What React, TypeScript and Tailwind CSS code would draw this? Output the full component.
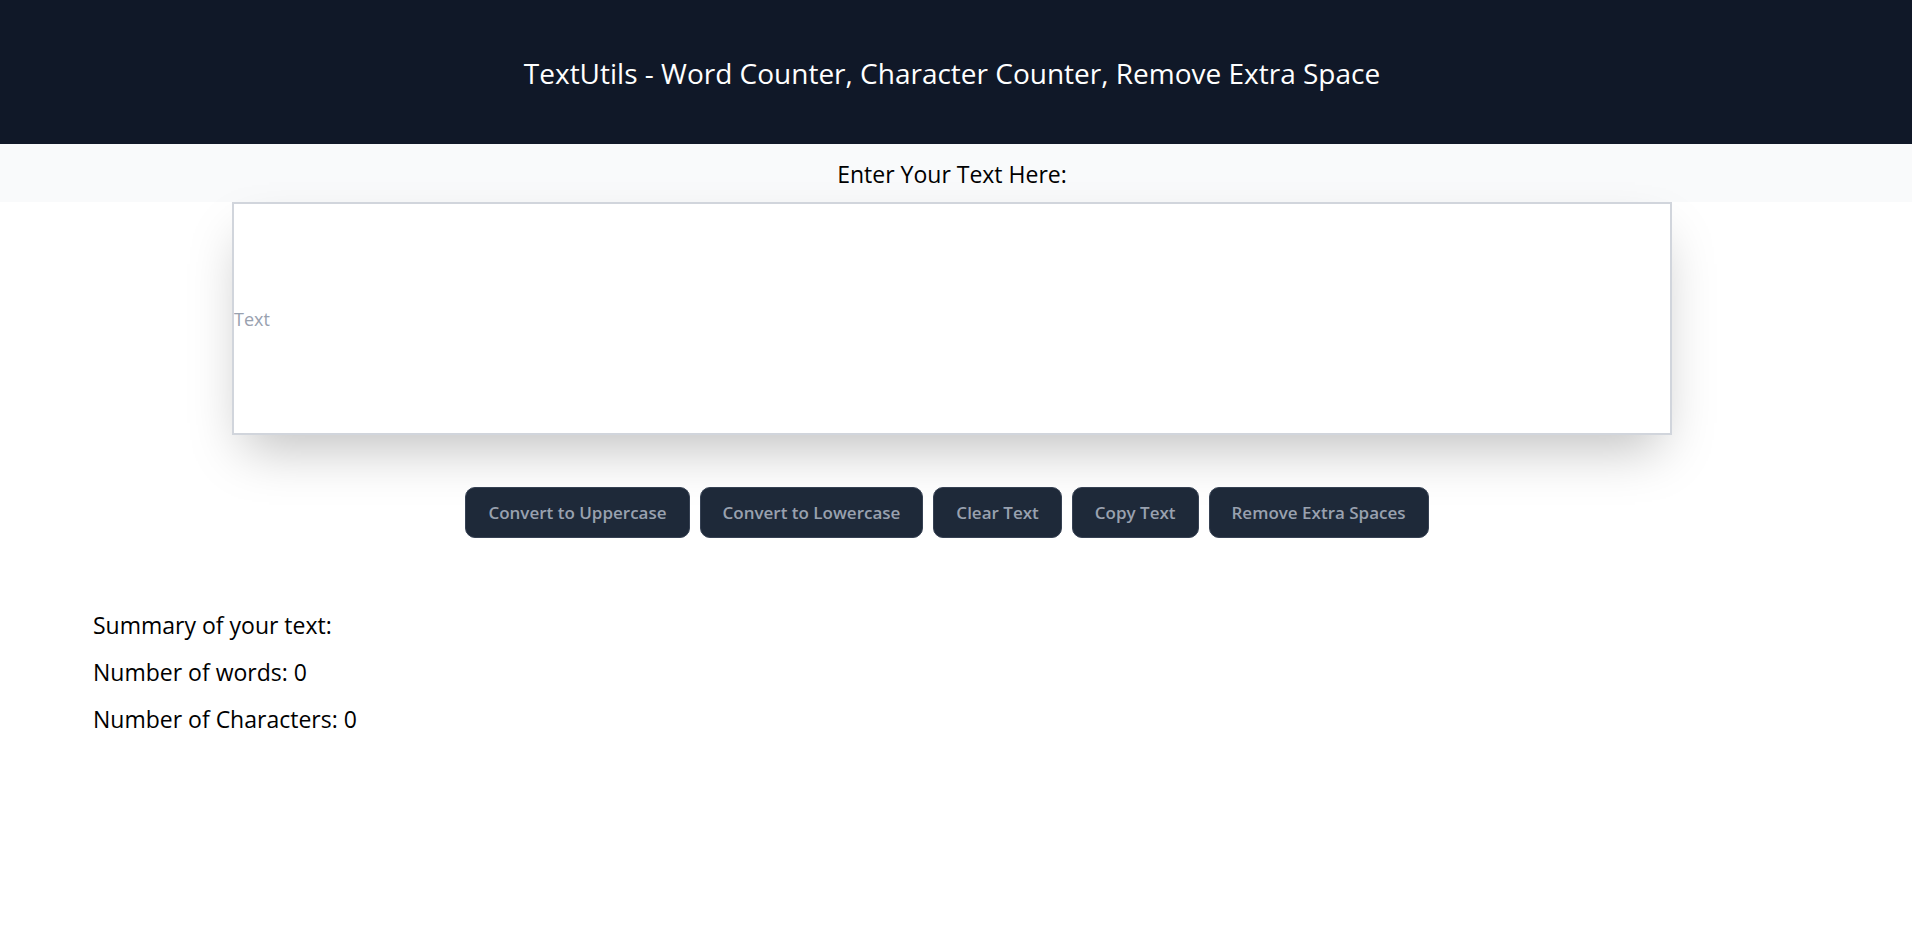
import { useState } from "react";

export default function App() {
  const [text, setText] = useState("");

  const words = text.split(/\s+/).filter((w) => w.length > 0).length;

  return (
    <div className="min-h-screen bg-white font-['Open_Sans',sans-serif]">
      <header className="flex h-[144px] items-center justify-center bg-gray-900 pr-[8px] pt-[2px] text-[28px] text-white">
        TextUtils - Word Counter, Character Counter, Remove Extra Space
      </header>

      <div className="flex h-[58px] items-center justify-center bg-gray-50 pr-[8px] pt-[2px] text-[23px] text-black">
        Enter Your Text Here:
      </div>

      <div className="flex justify-center pr-[8px]">
        <input
          type="text"
          value={text}
          onChange={(e) => setText(e.target.value)}
          placeholder="Text"
          className="h-[233px] w-[1440px] border-2 border-gray-300 bg-white text-lg shadow-2xl outline-none placeholder:text-gray-400"
        />
      </div>

      <div className="mt-[52px] flex justify-center gap-[10px] pr-[18px]">
        {["Convert to Uppercase", "Convert to Lowercase", "Clear Text", "Copy Text", "Remove Extra Spaces"].map((label) => (
          <button
            key={label}
            className="h-[51px] rounded-[10px] border border-gray-700 bg-gray-800 px-[22px] text-[17px] font-semibold text-gray-400"
          >
            {label}
          </button>
        ))}
      </div>

      <div className="mt-[71px] flex flex-col gap-[15px] pl-[93px] text-[23px] leading-8 text-black">
        <p>Summary of your text:</p>
        <p>Number of words: {words}</p>
        <p>Number of Characters: {text.length}</p>
      </div>
    </div>
  );
}
